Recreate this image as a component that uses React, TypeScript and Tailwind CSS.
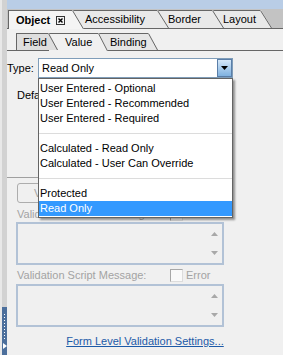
import React from "react";

const font = { fontFamily: '"Liberation Sans", Arial, sans-serif' };

function Slant({ fill, h }: { fill: string; h: number }) {
  return (
    <svg width="12" height={h} className="block shrink-0">
      <polygon points={`0,0 1,0 12,${h} 0,${h}`} fill={fill} />
      <line x1="0.5" y1="0.5" x2="11.5" y2={h} stroke="#666" strokeWidth="1" />
    </svg>
  );
}

function CloseBox() {
  return (
    <svg width="9" height="9" className="ml-[6px] block shrink-0">
      <rect x="0.5" y="0.5" width="8" height="8" fill="#f4f4f4" stroke="#333" />
      <path d="M2.5 2.5 L6.5 6.5 M6.5 2.5 L2.5 6.5" stroke="#000" strokeWidth="1.4" />
    </svg>
  );
}

function TopTab({ label, w, pl, active, close, z, bg }: { label: string; w: string; pl: string; active?: boolean; close?: boolean; z: string; bg: string }) {
  const h = active ? 19 : 18;
  return (
    <div className={`relative flex -mr-[12px] ${z} ${active ? "h-[19px] -mb-px" : "h-[18px]"}`}>
      <div className={`flex items-center border-l border-t border-[#666] text-[11px] text-black ${w} ${pl} ${active ? "font-bold" : ""}`} style={{ background: bg }}>
        <span>{label}</span>
        {close && <CloseBox />}
      </div>
      <Slant fill={bg} h={h} />
    </div>
  );
}

function SubTab({ label, w, pl, active, z, bg }: { label: string; w: string; pl: string; active?: boolean; z: string; bg: string }) {
  const h = active ? 18 : 17;
  return (
    <div className={`relative flex -mr-[10px] ${z} ${active ? "h-[18px] -mb-px" : "h-[17px]"}`}>
      <div className={`flex items-center border-l border-t border-[#666] text-[11px] text-black ${w} ${pl}`} style={{ background: bg }}>
        {label}
      </div>
      <svg width="10" height={h} className="block shrink-0">
        <polygon points={`0,0 1,0 10,${h} 0,${h}`} fill={bg} />
        <line x1="0.5" y1="0.5" x2="9.5" y2={h} stroke="#666" strokeWidth="1" />
      </svg>
    </div>
  );
}

function Arrows() {
  return (
    <div className="flex h-full w-[16px] flex-col items-center justify-between py-[8px]">
      <svg width="7" height="4"><polygon points="0,4 3.5,0 7,4" fill="#a8a8a8" /></svg>
      <svg width="7" height="4"><polygon points="0,0 3.5,4 7,0" fill="#a8a8a8" /></svg>
    </div>
  );
}

function MsgBox() {
  return (
    <div className="ml-[9px] flex h-[43px] w-[208px] justify-end border-2 border-[#b2c2d6] bg-[#f0f0f0]">
      <Arrows />
    </div>
  );
}

function LabelRow({ text }: { text: string }) {
  return (
    <div className="ml-[10px] flex h-[15px] items-center text-[11px] text-[#a3a3a3]">
      <span className="w-[153px]">{text}</span>
      <span className="mr-[3px] h-[13px] w-[13px] border border-[#a8a8a8] border-r-[#dcdcdc] border-b-[#dcdcdc] bg-[#fafafa]" />
      <span>Error</span>
    </div>
  );
}

const items: (string | null)[] = [
  "User Entered - Optional",
  "User Entered - Recommended",
  "User Entered - Required",
  null,
  "Calculated - Read Only",
  "Calculated - User Can Override",
  null,
  "Protected",
];

export default function App() {
  return (
    <div className="relative flex h-[355px] w-[283px] overflow-hidden bg-[#f0f0f0]" style={font}>
      <div className="flex w-[7px] shrink-0 flex-col border-l-2 border-[#e8e8e8] bg-[#d2d2d2]">
        <div className="flex-1" />
        <div className="flex h-[48px] flex-col items-center justify-center gap-[2px] bg-[#4c6f9c]">
          {Array.from({ length: 9 }).map((_, i) => (
            <span key={i} className="h-px w-px bg-white" />
          ))}
          <svg width="4" height="6" className="mt-[2px]"><polygon points="0,0 4,3 0,6" fill="#fff" /></svg>
        </div>
      </div>

      <div className="flex min-w-0 flex-1 flex-col">
        <div className="h-[9px] bg-[#b9cde6]" />
        <div className="flex h-[20px] items-end border-b border-[#666] bg-[#c3c3c3] pl-px">
          <TopTab label="Object" w="w-[64px]" pl="pl-[7px]" active close z="z-40" bg="#f4f4f4" />
          <TopTab label="Accessibility" w="w-[85px]" pl="pl-[12px]" z="z-30" bg="#e9e9e9" />
          <TopTab label="Border" w="w-[55px]" pl="pl-[10px]" z="z-20" bg="#e9e9e9" />
          <TopTab label="Layout" w="w-[48px]" pl="pl-[10px]" z="z-10" bg="#e9e9e9" />
        </div>

        <div className="mt-[3px] flex h-[19px] items-end border-b border-[#666] pl-[9px]">
          <SubTab label="Field" w="w-[32px]" pl="pl-[6px]" z="z-30" bg="#dedede" />
          <SubTab label="Value" w="w-[50px]" pl="pl-[16px]" active z="z-20" bg="#f0f0f0" />
          <SubTab label="Binding" w="w-[50px]" pl="pl-[11px]" z="z-10" bg="#e6e6e6" />
        </div>

        <div className="mt-[7px] flex h-[20px] items-center text-[11px] text-black">
          <span className="w-[31px]">Type:</span>
          <div className="flex h-[20px] w-[195px] items-center border border-[#7f9db9] bg-white">
            <span className="flex-1 pl-[3px]">Read Only</span>
            <div className="flex h-[18px] w-[15px] items-center justify-center border border-[#5a7ea8] bg-gradient-to-b from-[#d6e8f8] to-[#7fb2e0]">
              <svg width="7" height="4"><polygon points="0,0 7,0 3.5,4" fill="#000" /></svg>
            </div>
          </div>
        </div>

        <div className="ml-[10px] mt-[11px] h-[13px] text-[11px] leading-[13px] text-black">Default:</div>

        <div className="mt-[75px] h-px w-[225px] bg-[#a0a0a0]" />

        <div className="ml-[10px] mt-[5px] flex h-[20px] w-[90px] items-center rounded-[3px] border border-[#adadad] bg-[#f0f0f0] pl-[16px] text-[11px] text-[#a3a3a3]">
          Validation
        </div>

        <div className="mt-[4px]">
          <LabelRow text="Validation Pattern Message:" />
        </div>
        <MsgBox />

        <div className="mt-[3px]">
          <LabelRow text="Validation Script Message:" />
        </div>
        <div className="mt-px"><MsgBox /></div>

        <div className="mt-[8px] flex h-[13px] justify-center">
          <span className="text-[11px] leading-[13px] text-[#1c5aa8] underline">Form Level Validation Settings...</span>
        </div>
      </div>

      <div className="absolute left-[38px] top-[78px] z-50 w-[195px] border border-[#646464] bg-white text-[11px] leading-[15px] text-black shadow-[2px_2px_2px_rgba(0,0,0,0.4)]">
        <div className="pt-[2px] pb-px">
          {items.map((it, i) =>
            it === null ? (
              <div key={i} className="my-[7px] h-px bg-[#dcdcdc]" />
            ) : (
              <div key={i} className="h-[15px] pl-px">{it}</div>
            )
          )}
          <div className="h-[15px] bg-[#3399ff] pl-px text-white">Read Only</div>
        </div>
      </div>
    </div>
  );
}
